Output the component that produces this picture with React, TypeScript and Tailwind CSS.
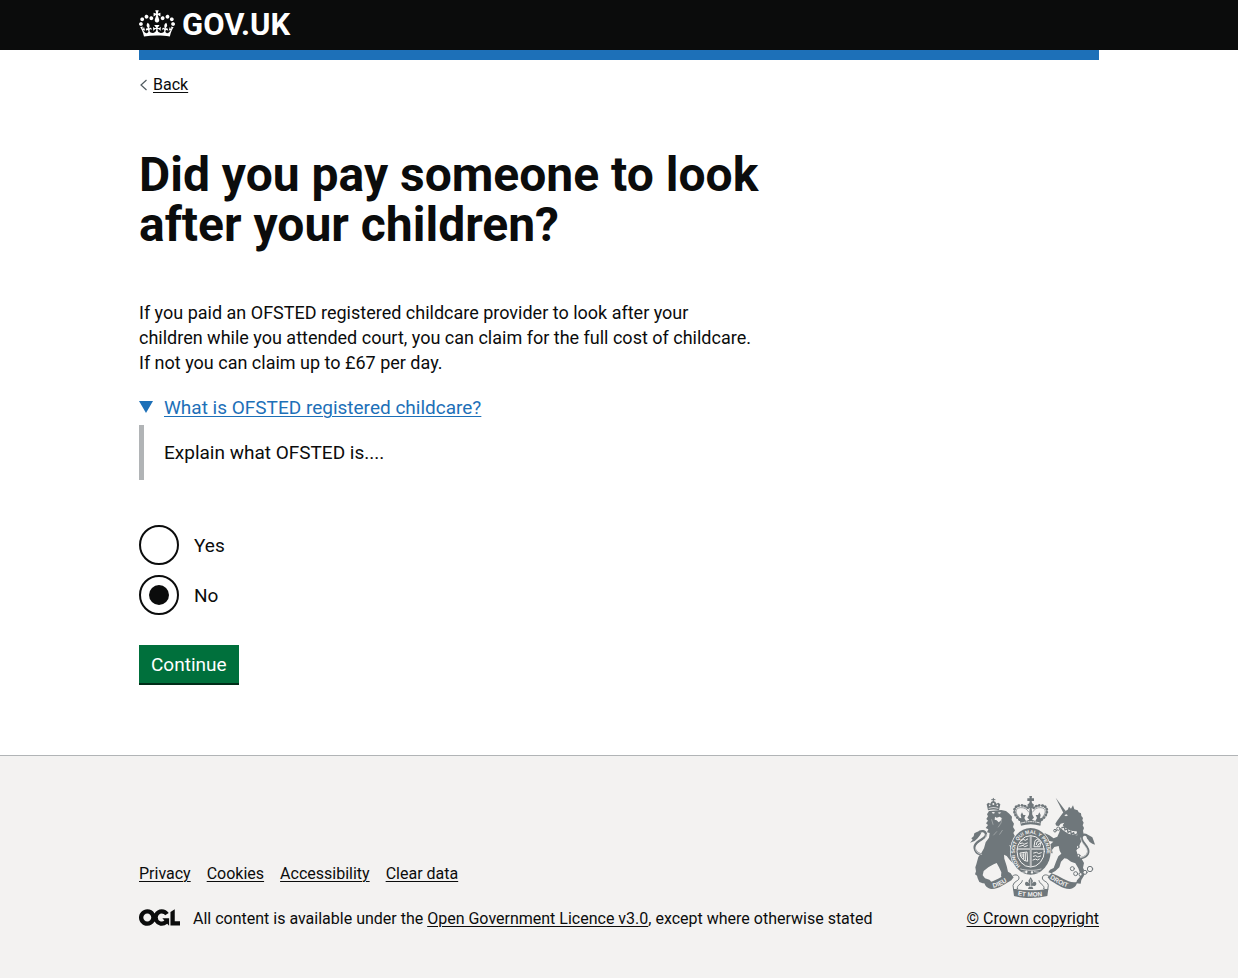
import { useState } from 'react';

const footerLinks = ['Privacy', 'Cookies', 'Accessibility', 'Clear data'];

function Crown() {
  return (
    <svg aria-hidden="true" viewBox="0 0 132 97" className="h-[27px] w-9 shrink-0 fill-current">
      <path
        fillRule="evenodd"
        d="M25 30.2c3.5 1.5 7.7-.2 9.1-3.7 1.5-3.6-.2-7.8-3.9-9.2-3.6-1.4-7.6.3-9.1 3.9-1.4 3.5.3 7.5 3.9 9zM9 39.5c3.6 1.5 7.8-.2 9.2-3.7 1.5-3.6-.2-7.8-3.9-9.1-3.6-1.5-7.6.2-9.1 3.8-1.4 3.5.3 7.5 3.8 9zM4.4 57.2c3.5 1.5 7.7-.2 9.1-3.8 1.5-3.6-.2-7.7-3.9-9.1-3.5-1.5-7.6.3-9.1 3.8-1.4 3.5.3 7.6 3.9 9.1zm38.3-21.4c3.5 1.5 7.7-.2 9.1-3.8 1.5-3.6-.2-7.7-3.9-9.1-3.6-1.5-7.6.3-9.1 3.8-1.3 3.6.4 7.7 3.9 9.1zm64.4-5.6c-3.6 1.5-7.8-.2-9.1-3.7-1.5-3.6.2-7.8 3.8-9.2 3.6-1.4 7.7.3 9.2 3.9 1.3 3.5-.4 7.5-3.9 9zm15.9 9.3c-3.6 1.5-7.7-.2-9.1-3.7-1.5-3.6.2-7.8 3.7-9.1 3.6-1.5 7.7.2 9.2 3.8 1.5 3.5-.3 7.5-3.8 9zm4.7 17.7c-3.6 1.5-7.8-.2-9.2-3.8-1.5-3.6.2-7.7 3.9-9.1 3.6-1.5 7.7.3 9.2 3.8 1.3 3.5-.4 7.6-3.9 9.1zM89.3 35.8c-3.6 1.5-7.8-.2-9.2-3.8-1.4-3.6.2-7.7 3.9-9.1 3.6-1.5 7.7.3 9.2 3.8 1.4 3.6-.3 7.7-3.9 9.1zM69.7 17.7l8.9 4.7V9.3l-8.9 2.8c-.2-.3-.5-.6-.9-.9L72.4 0H59.6l3.5 11.2c-.3.3-.6.5-.9.9l-8.8-2.8v13.1l8.8-4.7c.3.3.6.7.9.9l-5 15.4v.1c-.2.8-.4 1.6-.4 2.4 0 4.1 3.1 7.5 7 8.1h.2c.3 0 .7.1 1 .1.4 0 .7 0 1-.1h.2c4-.6 7.1-4.1 7.1-8.1 0-.8-.1-1.7-.4-2.4V34l-5.1-15.4c.4-.2.7-.6 1-.9zM66 92.8c16.9 0 32.8 1.1 47.1 3.2 4-16.9 8.9-26.7 14-33.5l-9.6-3.4c1 4.9 1.1 7.2 0 10.2-1.5-1.4-3-4.3-4.2-8.7L108.6 76c2.8-2 5-3.2 7.5-3.3-4.4 9.4-10 11.9-13.6 11.2-4.3-.8-6.3-4.6-5.6-7.9 1-4.7 5.7-5.9 8-.5 4.3-8.7-3-11.4-7.6-8.8 7.1-7.2 7.9-13.5 2.1-21.1-8 6.1-8.1 12.3-4.5 20.8-4.7-5.4-12.1-2.5-9.5 6.2 3.4-5.2 7.9-2 7.2 3.1-.6 4.3-6.4 7.8-13.5 7.2-10.3-.9-10.9-8-11.2-13.8 2.5-.5 7.1 1.8 11 7.3L80.2 60c-4.1 4.4-8 5.3-12.3 5.4 1.4-4.4 8-11.6 8-11.6H55.5s6.4 7.2 7.9 11.6c-4.2-.1-8-1-12.3-5.4l1.4 16.4c3.9-5.5 8.5-7.7 10.9-7.3-.3 5.8-.9 12.8-11.1 13.8-7.2.6-12.9-2.9-13.5-7.2-.7-5 3.8-8.3 7.1-3.1 2.7-8.7-4.6-11.6-9.4-6.2 3.7-8.5 3.6-14.7-4.6-20.8-5.8 7.6-5 13.9 2.2 21.1-4.7-2.6-11.9.1-7.7 8.8 2.3-5.5 7.1-4.2 8.1.5.7 3.3-1.3 7.1-5.7 7.9-3.5.7-9-1.8-13.5-11.2 2.5.1 4.7 1.3 7.5 3.3l-4.7-15.4c-1.2 4.4-2.7 7.2-4.3 8.7-1.1-3-.9-5.3 0-10.2l-9.5 3.4c5 6.9 9.9 16.7 14 33.5 14.8-2.1 30.8-3.2 47.7-3.2z"
      />
    </svg>
  );
}

function OglLogo() {
  return (
    <svg aria-hidden="true" viewBox="0 0 483.2 195.7" className="h-[17px] w-[41px] shrink-0 fill-current">
      <path d="M421.5 142.8V.1l-50.7 32.3v161.1h112.4v-50.7zm-122.3-9.6A47.12 47.12 0 0 1 221 97.8c0-26 21.1-47.1 47.1-47.1 16.7 0 31.4 8.7 39.7 21.8l42.7-27.2A97.63 97.63 0 0 0 268.1 0c-36.5 0-68.3 20.1-85.1 49.7A98 98 0 0 0 97.8 0C43.9 0 0 43.9 0 97.8s43.9 97.8 97.8 97.8c36.5 0 68.3-20.1 85.1-49.7a97.76 97.76 0 0 0 149.6 25.4l19.4 22.2h3v-87.8h-80l24.3 27.5zM97.8 145c-26 0-47.1-21.1-47.1-47.1s21.1-47.1 47.1-47.1 47.1 21.1 47.1 47.1S123.8 145 97.8 145" />
    </svg>
  );
}

function RoyalArms() {
  return (
    <svg
      aria-hidden="true"
      viewBox="30 30 384 312"
      className="h-[104px] w-32 fill-[#6f777b] font-['Liberation_Sans',sans-serif]"
      strokeLinejoin="round"
      strokeLinecap="round"
    >
      {/* lion */}
      <path d="M90 78l-6 10 3 6-5 8 5 5-6 8 6 5-7 9 8 4-4 9 8 2-2 14-10 14-5 18-8 14-9 12-6 22-3 9 2 12-3 9 6 4 2 8 5 11 10 4 22 1 3-7-5-5-13-4-7-9 3-13 14-11 16-9 9-4 7 13 7 15-1 12 6 5 12 1 11-1 5-6-5-8-8-5-4-17-7-22-1-12 8 4 10 13 13 12 16 4 4-6-6-9-6-5 8-2 3-6-9-5-8-3 6-5-3-6-13-5-8-9 12 3 14 2 5-7-4-8-9-5 1-10-6-12 5-8-6-10 3-10-7-11 1-10-8-9-10-8-14-3z" />
      <path d="M87 76l-4-18 5-5 6 3 3-6 6-2 6 2 3 6 6-3 6 5-4 18q-17-5-33 0z" />
      <path d="M103 40v10M98 44h10" fill="none" stroke="#6f777b" strokeWidth="3" />
      <path d="M128 100l-2 14-8 12M98 104l4 14M104 150l9-10M122 148l8-12" fill="none" stroke="#f3f2f1" strokeWidth="1" />
      <g fill="#f3f2f1">
        <circle cx="92" cy="61" r="2.500" />
        <circle cx="103" cy="57" r="3" />
        <circle cx="115" cy="61" r="2.500" />
        <path d="M89 69q14-4 29 0v2q-15-4-29 0zM98 82q8-3 10 2l-6 2zM116 83q7-3 11 0l-6 3zM108 95l5 3 9-3 6 4-3 8-6 5-6-6-6-2z" />
      </g>
      <path d="M70 209c-22-3-30-23-16-36 12-11 28-14 27-25-1-10-14-14-24-4" fill="none" stroke="#6f777b" strokeWidth="7" />
      <path d="M68 208c-18-3-24-19-11-31 13-11 26-15 25-28" fill="none" stroke="#f3f2f1" strokeWidth="2" />
      <path d="M33 173l8-9-4-4 7-6 2-9 9-5 12 3-4 8-7 9-9 8z" />

      {/* unicorn */}
      <path d="M290 38l30 40-7 5z" />
      <path d="M313 82l13-8 4-9 6 6 6-10 4 12 10 3 3 6 7 3 1 8 5 6-2 7 4 7-3 8 4 8-3 8 2 11-6 8 1 10-6 10-3 10-8 10 3 10 12 14 8 14-3 14 7 15-6 12-6 10-2 11-14-1 3-9 8-9 1-13-5-14-9-15-13-5-12-9-8-1-10 10-5 17-12 11-12 7-9-3 5-8 11-5 7-19 7-16 9-8-5-9-3-14-13 3-7 9 2 10-9-1-6-8 6-16 11-10-12-2-7 4-7-8 5-4-12-3-1-8 9-4 13 6 13 9 11-5 6-13 3-11 6-9 6-9-11 3-5 7-8-1-3-6 5-8z" />
      <path d="M362 220c20-3 29-13 25-27-4-14-21-23-19-36 1-7 8-10 14-7" fill="none" stroke="#6f777b" strokeWidth="7" />
      <path d="M364 218c17-3 24-13 20-24-5-14-19-22-19-35" fill="none" stroke="#f3f2f1" strokeWidth="2" />
      <path d="M379 147l9 3 12 7 4 10 4 12-8-3-8-5-8-11z" />
      <path d="M316 91l6-3 5 3-6 3z" fill="#f3f2f1" />
      <path d="M309 119c12 14 28 19 44 20l2 12c-19 0-38-8-49-22z" fill="#f3f2f1" />
      <path d="M309 128l7-2 2 9 7-3 2 10 8-4 2 10 7-5 2 9 7-5" fill="none" stroke="#6f777b" strokeWidth="4" />
      <g fill="#f3f2f1" stroke="#6f777b" strokeWidth="3">
        <circle cx="298" cy="131" r="5" />
        <circle cx="288" cy="137" r="4" />
        <circle cx="356" cy="186" r="4" />
        <circle cx="359" cy="212" r="4" />
        <circle cx="340" cy="251" r="6" />
        <circle cx="350" cy="266" r="6" />
        <circle cx="365" cy="268" r="5" />
        <circle cx="378" cy="262" r="6" />
        <circle cx="393" cy="252" r="8" />
      </g>

      {/* crown */}
      <g fill="none" stroke="#6f777b">
        <path d="M182 104c-24-19-19-42 2-43 14 0 22 6 26 12M248 104c24-19 19-42-2-43-14 0-22 6-26 12" strokeWidth="8" strokeDasharray="1 8" />
        <path d="M184 102c-19-19-15-33 0-34 12-1 20 4 25 13M246 102c19-19 15-33 0-34-12-1-20 4-25 13" strokeWidth="2" />
      </g>
      <path d="M211 33h8l-1 7h7v8h-7l1 6 6 5-4 10h-3l2 20 5 9-10 9-10-9 5-9 2-20h-3l-4-10 6-5 1-6h-7v-8h7z" />
      <path d="M189 82l4 8 7 0-4 9 5 9 8-3 6-6 6 6 8 3 5-9-4-9 7 0 4-8 4 8-2 10 6-1-5 23c-19-6-39-6-58 0l-5-23 6 1-2-10z" />
      <path d="M187 114q28-8 56 0" fill="none" stroke="#f3f2f1" strokeWidth="3" strokeDasharray="3 4" />

      {/* garter and shield */}
      <ellipse cx="215" cy="199" rx="62" ry="72" fill="#f3f2f1" />
      <ellipse cx="215" cy="199" rx="60" ry="70" />
      <ellipse cx="215" cy="199" rx="41" ry="47" fill="none" stroke="#f3f2f1" strokeWidth="3" />
      <path id="garter-band" d="M184 243A48 55 0 1 1 246 243" fill="none" />
      <text fill="#f3f2f1" fontSize="15" fontWeight="700">
        <textPath href="#garter-band">HONI SOIT QUI MAL Y PENSE</textPath>
      </text>
      <path d="M215 154v90M175 192h80" stroke="#f3f2f1" strokeWidth="5" />
      <path d="M215 154v90M177 192h76" stroke="#6f777b" strokeWidth="1.500" />
      <g fill="none" stroke="#f3f2f1" strokeWidth="3">
        <path d="M186 167l7-4 6 3 7-4M183 176l7-2 5 4 10-4M182 184l10-3 5 4 8-3" />
        <path d="M224 204l9-2 6 4 8-3M223 214l7-2 6 4 9-3M222 225l8-3 5 3 6-3" />
        <path d="M225 184l3-17 8-5 9 10-2 12zM232 179l2-8 6-3M236 182l6-8" />
        <path d="M184 204l20-3 2 28-11-3-9-10zM189 207v8M194 206v15M199 205v21" />
      </g>
      <path d="M185 252c14 5 46 6 61 0M190 262l14-2M226 260l14 2" fill="none" stroke="#f3f2f1" strokeWidth="2" />
      <path d="M202 256l4 5-4 5-4-5zM219 257l4 5-4 5-4-5z" fill="#f3f2f1" />

      {/* fleur-de-lis badge */}
      <path d="M215 276l7 12-4 9c6-10 14-8 14-1 0 6-7 9-13 6l4 10h-16l4-10c-6 3-13 0-13-6 0-7 8-9 14 1l-4-9z" />
      <path d="M215 284v20M206 304h18" fill="none" stroke="#f3f2f1" strokeWidth="2" />

      {/* motto scrolls */}
      <path d="M158 276c6-10 22-8 22 3 0 10-16 9-18 22l2 14 12-3c-5-12 12-13 14-25M272 276c-6-10-22-8-22 3 0 10 16 9 18 22l-2 14-12-3c5-12-12-13-14-25" fill="#f3f2f1" stroke="#6f777b" strokeWidth="3" />
      <path d="M76 291c26 6 48-17 76-26l12 12-7 9c-16 8-35 26-59 26-12-1-22-10-22-21z" />
      <path d="M354 291c-26 6-48-17-76-26l-12 12 7 9c16 8 35 26 59 26 12-1 22-10 22-21z" />
      <path d="M162 311c34 6 72 6 106 0l-3 22c-32 8-68 8-100 0z" />
      <path id="scroll-left" d="M103 308c20-3 34-15 52-25" fill="none" />
      <path id="scroll-right" d="M272 280c20 12 36 24 60 29" fill="none" />
      <path id="scroll-base" d="M176 331c28 5 57 5 84 0" fill="none" />
      <g fill="#f3f2f1" fontSize="19" fontWeight="700">
        <text><textPath href="#scroll-left">DIEU</textPath></text>
        <text><textPath href="#scroll-right">DROIT</textPath></text>
        <text><textPath href="#scroll-base">ET MON</textPath></text>
      </g>
    </svg>
  );
}

interface RadioOptionProps {
  label: string;
  checked: boolean;
  onSelect: () => void;
}

function RadioOption({ label, checked, onSelect }: RadioOptionProps) {
  const id = `childcare-${label.toLowerCase()}`;
  return (
    <div className="flex items-center">
      <input
        id={id}
        type="radio"
        name="childcare"
        value={label}
        checked={checked}
        onChange={onSelect}
        className="size-10 cursor-pointer appearance-none rounded-full border-2 border-[#0b0c0c] bg-white bg-clip-content p-2 checked:bg-[#0b0c0c] focus:outline-3 focus:outline-[#ffdd00]"
      />
      <label htmlFor={id} className="cursor-pointer px-[15px] py-[7px]">
        {label}
      </label>
    </div>
  );
}

export default function App() {
  const [answer, setAnswer] = useState('No');
  const link = 'underline underline-offset-2 decoration-1';

  return (
    <div className="flex min-h-screen flex-col bg-white font-[Roboto,'Liberation_Sans',sans-serif] text-[19px] leading-[25px] text-[#0b0c0c]">
      <header className="bg-[#0b0c0c] text-white">
        <div className="mx-auto h-[50px] max-w-[960px] pt-[10px]">
          <a href="#home" className="inline-flex items-start gap-[7px]">
            <Crown />
            <span className="text-[31px] leading-[30px] font-bold">GOV.UK</span>
          </a>
        </div>
      </header>

      <div className="mx-auto w-full max-w-[960px]">
        <div className="h-[10px] bg-[#1d70b8]" />
        <a href="#back" className="mt-[15px] inline-flex items-center gap-[5px] text-base leading-5">
          <svg aria-hidden="true" viewBox="0 0 9 12" className="h-3 w-[9px] fill-none stroke-[#505a5f]">
            <path d="M7.500 1L2 6l5.500 5" strokeWidth="1.200" />
          </svg>
          <span className={link}>Back</span>
        </a>

        <main className="max-w-[630px] pt-[53px] pb-[70px]">
          <h1 id="question" className="mb-[50px] text-[48px] leading-[50px] font-bold">
            Did you pay someone to look after your children?
          </h1>
          <p className="mb-5 max-w-[615px] text-[18px] leading-[25px]">
            If you paid an OFSTED registered childcare provider to look after your children while you attended court,
            you can claim for the full cost of childcare. If not you can claim up to £67 per day.
          </p>
          <details open className="group mb-[45px]">
            <summary className="flex cursor-pointer list-none items-center gap-[11px] text-[#1d70b8]">
              <svg aria-hidden="true" viewBox="0 0 14 14" className="size-[14px] -rotate-90 fill-current group-open:rotate-0">
                <path d="M0 0h14L7 12z" />
              </svg>
              <span className={link}>What is OFSTED registered childcare?</span>
            </summary>
            <div className="mt-[5px] border-l-5 border-[#b1b4b6] px-5 py-[15px]">Explain what OFSTED is....</div>
          </details>

          <form onSubmit={(event) => event.preventDefault()}>
            <fieldset aria-labelledby="question" className="mb-[30px] flex flex-col gap-[10px]">
              {['Yes', 'No'].map((option) => (
                <RadioOption
                  key={option}
                  label={option}
                  checked={answer === option}
                  onSelect={() => setAnswer(option)}
                />
              ))}
            </fieldset>
            <button
              type="submit"
              className="mb-[2px] block h-[38px] cursor-pointer bg-[#00703c] px-3 text-white shadow-[0_2px_0_#002d18]"
            >
              Continue
            </button>
          </form>
        </main>
      </div>

      <footer className="grow border-t border-[#b1b4b6] bg-[#f3f2f1] pt-[39px] pb-[50px] text-base leading-5">
        <div className="mx-auto flex w-full max-w-[960px] items-end justify-between">
          <div>
            <ul className="mb-[25px] flex gap-4">
              {footerLinks.map((text) => (
                <li key={text}>
                  <a href="#footer" className={link}>
                    {text}
                  </a>
                </li>
              ))}
            </ul>
            <div className="flex items-start gap-[13px]">
              <OglLogo />
              <span>
                All content is available under the{' '}
                <a href="#licence" className={link}>
                  Open Government Licence v3.0
                </a>
                , except where otherwise stated
              </span>
            </div>
          </div>
          <a href="#copyright" className={`flex flex-col items-center gap-[10px] ${link}`}>
            <RoyalArms />
            © Crown copyright
          </a>
        </div>
      </footer>
    </div>
  );
}
